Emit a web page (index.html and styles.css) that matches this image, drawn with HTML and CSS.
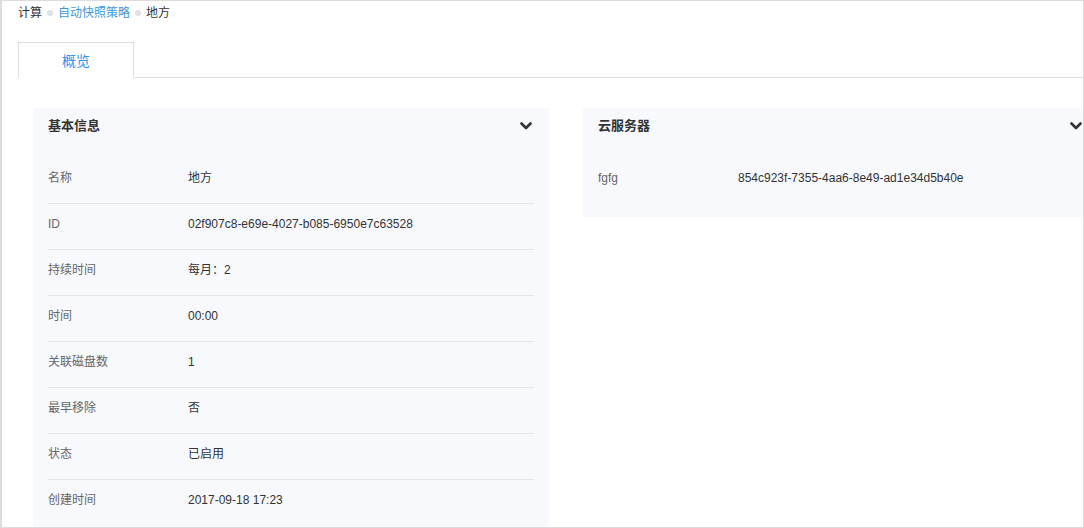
FILE: index.html
```html
<!DOCTYPE html>
<html lang="zh">
<head>
<meta charset="utf-8">
<title>地方</title>
<link rel="stylesheet" href="styles.css">
</head>
<body>
<div class="frame">
  <div class="breadcrumb">
    <span class="crumb">计算</span><span class="dot"></span><a class="crumb link">自动快照策略</a><span class="dot"></span><span class="crumb">地方</span>
  </div>
  <div class="tabs">
    <div class="tab active">概览</div>
  </div>
  <div class="content">
    <section class="card">
      <div class="card-head">
        <span class="card-title">基本信息</span>
        <svg class="chev" width="12" height="8" viewBox="0 0 12 8"><polyline points="1.5,1.5 6,6 10.5,1.5" fill="none" stroke="#333" stroke-width="2.6" stroke-linecap="round" stroke-linejoin="round"/></svg>
      </div>
      <div class="card-body">
        <div class="row"><span class="label">名称</span><span class="value">地方</span></div>
        <div class="row"><span class="label">ID</span><span class="value">02f907c8-e69e-4027-b085-6950e7c63528</span></div>
        <div class="row"><span class="label">持续时间</span><span class="value">每月：2</span></div>
        <div class="row"><span class="label">时间</span><span class="value">00:00</span></div>
        <div class="row"><span class="label">关联磁盘数</span><span class="value">1</span></div>
        <div class="row"><span class="label">最早移除</span><span class="value">否</span></div>
        <div class="row"><span class="label">状态</span><span class="value">已启用</span></div>
        <div class="row"><span class="label">创建时间</span><span class="value">2017-09-18 17:23</span></div>
      </div>
    </section>
    <section class="card card-short">
      <div class="card-head">
        <span class="card-title">云服务器</span>
        <svg class="chev" width="12" height="8" viewBox="0 0 12 8"><polyline points="1.5,1.5 6,6 10.5,1.5" fill="none" stroke="#333" stroke-width="2.6" stroke-linecap="round" stroke-linejoin="round"/></svg>
      </div>
      <div class="card-body">
        <div class="row"><span class="label">fgfg</span><span class="value">854c923f-7355-4aa6-8e49-ad1e34d5b40e</span></div>
      </div>
    </section>
  </div>
</div>
</body>
</html>
```

FILE: styles.css
```css
* { box-sizing: border-box; }
html, body { margin: 0; padding: 0; background: #fff; }
body {
  font-family: "Liberation Sans", Arial, "Noto Sans CJK SC", sans-serif;
  font-size: 12px;
  color: #333;
}
.frame {
  width: 1084px;
  height: 528px;
  border: 1px solid #dcdcdc;
  border-left: 2px solid #dcdcdc;
  overflow: hidden;
}
.breadcrumb {
  height: 24px;
  line-height: 24px;
  padding-left: 16px;
  display: flex;
  align-items: center;
}
.crumb { color: #333; }
.crumb.link { color: #3d97dc; text-decoration: none; }
.dot {
  width: 6px;
  height: 6px;
  border-radius: 50%;
  background: #dfe1e6;
  margin: 0 5px;
}
.tabs {
  margin-top: 17px;
  margin-left: 16px;
  border-bottom: 1px solid #dcdfe3;
  display: flex;
}
.tab {
  width: 116px;
  height: 36px;
  line-height: 36px;
  text-align: center;
  font-size: 14px;
  border: 1px solid #dcdfe3;
  border-bottom-color: #fff;
  margin-bottom: -1px;
  background: #fff;
}
.tab.active { color: #3391f5; }
.content {
  display: flex;
  gap: 34px;
  padding: 30px 0 0 31px;
  align-items: flex-start;
}
.card {
  flex: 0 0 516px;
  background: #f7f9fd;
  min-height: 440px;
}
.card-short { min-height: 0; }
.card-head {
  height: 36px;
  padding: 0 15px 4px 15px;
  display: flex;
  align-items: center;
  justify-content: space-between;
}
.card-title {
  font-size: 13px;
  font-weight: bold;
  color: #333;
}
.chev { margin-right: 2px; margin-top: 4px; }
.card-body {
  padding: 14px 15px 14px 15px;
}
.row {
  display: flex;
  line-height: 18px;
  padding: 11px 0 16px;
}
.row + .row { border-top: 1px solid #e4e6ea; }
.label { width: 140px; flex: 0 0 140px; color: #666; }
.value { color: #333; }
```
